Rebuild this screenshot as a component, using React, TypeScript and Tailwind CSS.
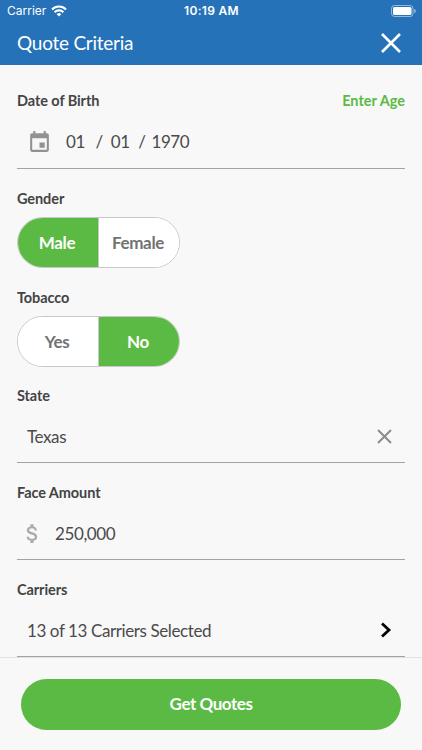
import React from 'react';
import clsx from 'clsx';

interface FieldProps {
  label: string;
  action?: React.ReactNode;
  className?: string;
  children: React.ReactNode;
}

const Field = ({ label, action, className, children }: FieldProps) => (
  <div className={className}>
    <div className="flex h-5 items-center justify-between text-[14.5px] font-bold leading-5">
      <label className="tracking-[-0.08px] text-[#444]">{label}</label>
      {action}
    </div>
    {children}
  </div>
);

const InputRow = ({ className, children }: { className?: string; children: React.ReactNode }) => (
  <div
    className={clsx(
      'flex items-center border-b border-[#a3a3a3] pt-[5px] text-[17px] leading-6 tracking-[-0.4px] text-[#4a4a4a]',
      className
    )}
  >
    {children}
  </div>
);

interface ToggleProps {
  options: string[];
  selected: string;
}

const Toggle = ({ options, selected }: ToggleProps) => (
  <div className="-ml-[0.5px] mt-2 flex h-[51px] w-[163px] overflow-hidden rounded-full border border-[#c8c8c8] bg-white">
    {options.map((option, index) => (
      <button
        key={option}
        className={clsx(
          'flex-1 pr-px text-[17px] font-bold tracking-[-0.35px]',
          index > 0 && 'border-l border-[#c8c8c8]',
          option === selected ? 'bg-[#5bba43] text-white' : 'bg-white text-[#737373]'
        )}
      >
        {option}
      </button>
    ))}
  </div>
);

const StatusBar = () => (
  <div className="grid h-[22px] grid-cols-3 items-center pl-[7px] pr-[6px] font-[Inter,sans-serif] text-[12px] leading-none">
    <div className="flex items-center gap-[5px]">
      <span>Carrier</span>
      <svg width="16" height="12" viewBox="0 0 16 12" fill="none" stroke="currentColor" strokeWidth="2.1">
        <path d="M1 4.4a10 10 0 0 1 14 0" />
        <path d="M3.6 7.2a6.3 6.3 0 0 1 8.8 0" />
        <path d="M8 11.6 5.7 9.2a3.3 3.3 0 0 1 4.6 0z" fill="currentColor" stroke="none" />
      </svg>
    </div>
    <span className="text-center font-semibold tracking-[0.3px]">10:19 AM</span>
    <svg className="justify-self-end" width="25" height="12" viewBox="0 0 25 12" fill="none">
      <rect x="0.5" y="0.5" width="21.5" height="11" rx="3" stroke="white" strokeOpacity="0.5" />
      <rect x="2" y="2" width="18.5" height="8" rx="1.6" fill="white" />
      <path d="M23.3 4v4c1-.4 1.4-1.1 1.4-2s-.4-1.6-1.4-2z" fill="white" fillOpacity="0.6" />
    </svg>
  </div>
);

const App = () => {
  return (
    <div className="flex h-[750px] w-[422px] flex-col overflow-hidden bg-[#f8f8f8] font-[Lato,sans-serif]">
      <header className="h-[65px] shrink-0 bg-[#2672b9] text-white">
        <StatusBar />
        <div className="flex h-[42px] items-center justify-between pl-[17px] pr-[21px]">
          <h1 className="text-[19px] leading-6 tracking-[-0.25px]">Quote Criteria</h1>
          <svg width="20" height="20" viewBox="0 0 20 20" stroke="currentColor" strokeWidth="2.6">
            <path d="M1 1l18 18M19 1L1 19" />
          </svg>
        </div>
      </header>

      <main className="flex-1 px-[17px] pt-[26px]">
        <Field
          label="Date of Birth"
          action={<button className="text-[#5bba43]">Enter Age</button>}
        >
          <InputRow className="h-[58px]">
            <svg className="ml-[9.5px] mr-[14.5px]" width="25" height="25" viewBox="0 0 24 24" fill="#929292">
              <path d="M17 12h-5v5h5v-5zM16 1v2H8V1H6v2H5c-1.11 0-1.99.9-1.99 2L3 19c0 1.1.89 2 2 2h14c1.1 0 2-.9 2-2V5c0-1.1-.9-2-2-2h-1V1h-2zm3 18H5V8h14v11z" />
            </svg>
            <span>01</span>
            <span className="ml-[10.5px]">/</span>
            <span className="ml-[8px]">01</span>
            <span className="ml-[8.5px]">/</span>
            <span className="ml-[6px]">1970</span>
          </InputRow>
        </Field>

        <Field label="Gender" className="mt-5">
          <Toggle options={['Male', 'Female']} selected="Male" />
        </Field>

        <Field label="Tobacco" className="mt-5">
          <Toggle options={['Yes', 'No']} selected="No" />
        </Field>

        <Field label="State" className="mt-[19px]">
          <InputRow className="h-[57px] justify-between pl-[10px] pr-[13px]">
            <span>Texas</span>
            <svg width="15" height="15" viewBox="0 0 15 15" stroke="#8c8c8c" strokeWidth="2">
              <path d="M1 1l13 13M14 1L1 14" />
            </svg>
          </InputRow>
        </Field>

        <Field label="Face Amount" className="mt-5">
          <InputRow className="h-[57px] pl-[3px]">
            <svg width="25" height="25" viewBox="0 0 24 24" fill="#aaa">
              <path d="M11.8 10.9c-2.27-.59-3-1.2-3-2.15 0-1.09 1.01-1.85 2.7-1.85 1.78 0 2.44.85 2.5 2.1h2.21c-.07-1.72-1.12-3.3-3.21-3.81V3h-3v2.16c-1.94.42-3.5 1.68-3.5 3.61 0 2.31 1.91 3.46 4.7 4.13 2.5.6 3 1.48 3 2.41 0 .69-.49 1.79-2.7 1.79-2.06 0-2.87-.92-2.98-2.1h-2.2c.12 2.19 1.76 3.42 3.68 3.83V21h3v-2.15c1.95-.37 3.5-1.5 3.5-3.55 0-2.84-2.43-3.81-4.7-4.4z" />
            </svg>
            <span className="ml-[10px]">250,000</span>
          </InputRow>
        </Field>

        <Field label="Carriers" className="mt-5">
          <InputRow className="h-[57px] justify-between pl-[10px] pr-[13px]">
            <span>13 of 13 Carriers Selected</span>
            <svg className="-mt-px" width="12" height="16" viewBox="0 0 12 16" fill="none" stroke="#000" strokeWidth="2.8">
              <path d="M2 1.5L9 8l-7 6.5" />
            </svg>
          </InputRow>
        </Field>
      </main>

      <footer className="h-[93px] shrink-0 border-t border-[#e2e2e2] px-[21px] pt-[20.5px]">
        <button className="h-[51px] w-full rounded-full bg-[#5bba43] text-[17px] font-bold tracking-[-0.45px] text-white">
          Get Quotes
        </button>
      </footer>
    </div>
  );
};

export default App;
